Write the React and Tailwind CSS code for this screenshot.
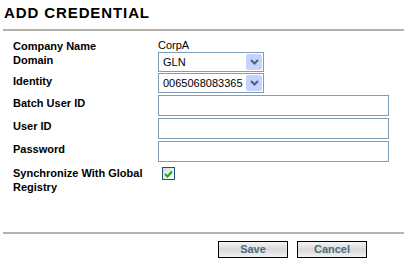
import React from "react";

function Select({ value }) {
  return (
    <div className="flex h-[20px] w-[106px] items-center border border-[#7f9db9] bg-white pl-[4px] pr-[1px]">
      <span className="flex-1 text-[11px] leading-none text-black">{value}</span>
      <div className="flex h-[16px] w-[16px] items-center justify-center rounded-[2px] bg-[#c4d4fa]">
        <svg width="9" height="6" viewBox="0 0 9 6">
          <path d="M1 1 L4.5 4.5 L8 1" fill="none" stroke="#4d6185" strokeWidth="2" />
        </svg>
      </div>
    </div>
  );
}

function TextInput() {
  return <input type="text" className="block h-[21px] w-[231px] border border-[#7f9db9] bg-white outline-none" />;
}

function Row({ label, children, className = "" }) {
  return (
    <div className={"flex " + className}>
      <div className="w-[145px] shrink-0 pt-[1px] text-[11px] font-bold leading-[14px] text-black">{label}</div>
      <div className="flex items-start leading-none">{children}</div>
    </div>
  );
}

function Button({ children }) {
  return (
    <button className="h-[17px] w-[70px] border border-black bg-[linear-gradient(to_bottom,#f4f4f4,#d9d9d9_50%,#f0f0f0)] text-[11px] font-bold leading-none text-[#4a6c7c]">
      {children}
    </button>
  );
}

export default function App() {
  return (
    <div className="h-[267px] w-[407px] bg-white font-['Liberation_Sans',Arial,sans-serif]">
      <div className="px-[4px] pt-[4px]">
        <h1 className="text-[15px] font-bold leading-[17px] tracking-[0.9px] text-black">ADD CREDENTIAL</h1>
      </div>
      <div className="mx-[3px] mt-[8px] h-[2px] bg-[#b5b2a8]" />

      <div className="pl-[13px] pt-[7px]">
        <Row label="Company Name" className="h-[14px]">
          <span className="text-[11px] leading-[14px] text-black">CorpA</span>
        </Row>
        <Row label="Domain" className="mb-[1px]">
          <Select value="GLN" />
        </Row>
        <Row label="Identity" className="mb-[2px]">
          <Select value="0065068083365" />
        </Row>
        <Row label="Batch User ID" className="mb-[2px]">
          <TextInput />
        </Row>
        <Row label="User ID" className="mb-[2px]">
          <TextInput />
        </Row>
        <Row label="Password" className="mb-[3px]">
          <TextInput />
        </Row>
        <Row label={<>Synchronize With Global<br />Registry</>}>
          <div className="ml-[4px] mt-[2px] flex h-[13px] w-[13px] items-center justify-center border border-[#1c5180] bg-[linear-gradient(135deg,#dcdcd6,#ffffff)]">
            <svg width="9" height="8" viewBox="0 0 9 8">
              <path d="M1 4 L3.5 6.5 L8 1.5" fill="none" stroke="#21a121" strokeWidth="2" />
            </svg>
          </div>
        </Row>
      </div>

      <div className="mx-[3px] mt-[38px] h-[2px] bg-[#b5b2a8]" />
      <div className="flex gap-[9px] pl-[218px] pt-[7px]">
        <Button>Save</Button>
        <Button>Cancel</Button>
      </div>
    </div>
  );
}
